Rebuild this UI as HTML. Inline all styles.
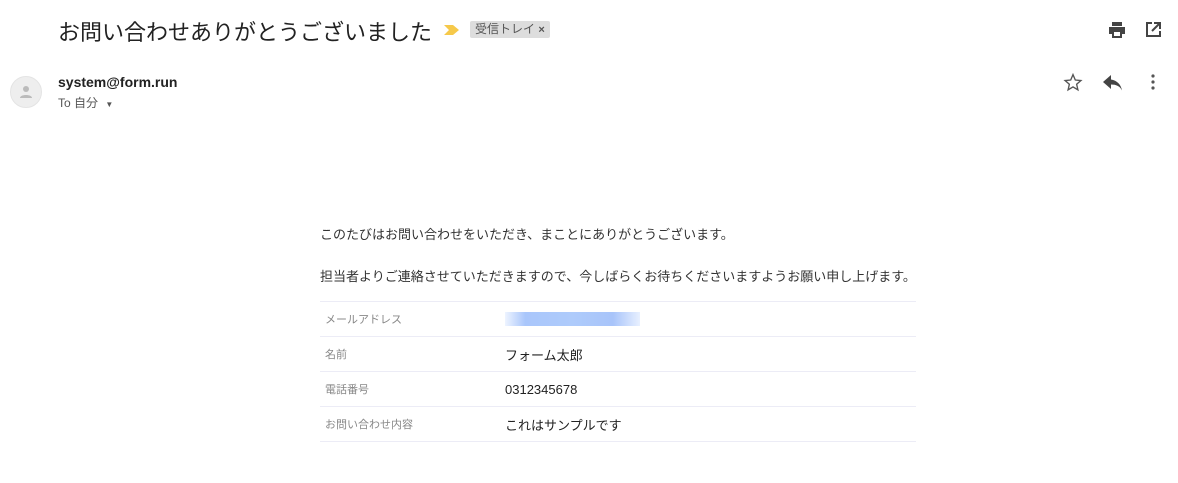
<!DOCTYPE html>
<html><head><meta charset="utf-8"><style>
body{margin:0;width:1178px;height:483px;background:#fff;font-family:"Liberation Sans","Noto Sans CJK JP",sans-serif;position:relative;overflow:hidden;color:#222}
.a{position:absolute;white-space:nowrap}
table{border-collapse:collapse;width:596px}
td{border-top:1px solid #ececf6;height:34px;font-size:13px;padding:0}
td.l{color:#888;font-size:11px;width:180px;padding-left:5px}
</style></head><body>
<div class="a" style="left:58px;top:15px;font-size:22px;color:#222">お問い合わせありがとうございました</div>
<svg class="a" style="left:444px;top:24px" width="16" height="12"><path d="M0 1h9l6 5-6 5H0l5-5z" fill="#f6c94a"/></svg>
<div class="a" style="left:470px;top:21px;height:17px;line-height:17px;background:#ddd;border-radius:2px;padding:0 5px;font-size:12px;color:#555">受信トレイ <b style="font-size:11px">×</b></div>
<svg class="a" style="left:1108px;top:22px" width="18" height="16" viewBox="0 0 18 16"><path d="M4 0h10v4H4z M1 5h16v7h-3v4H4v-4H1z" fill="#444"/><rect x="6" y="10" width="6" height="4" fill="#fff"/></svg>
<svg class="a" style="left:1145px;top:22px" width="16" height="16" viewBox="0 0 16 16"><path d="M7 1H2v13h13V9" fill="none" stroke="#444" stroke-width="2"/><path d="M9 1h6v6M15 1L7 9" fill="none" stroke="#444" stroke-width="2"/></svg>
<div class="a" style="left:10px;top:76px;width:32px;height:32px;border-radius:50%;background:#eee;border:1px solid #e4e4e4;box-sizing:border-box"></div>
<svg class="a" style="left:18px;top:84px" width="16" height="16"><circle cx="8" cy="5" r="3" fill="#bbb"/><path d="M2 14c0-4 12-4 12 0z" fill="#bbb"/></svg>
<div class="a" style="left:58px;top:74px;font-size:14px;font-weight:bold;color:#222">system@form.run</div>
<div class="a" style="left:58px;top:94px;font-size:12px;color:#555">To 自分 <span style="font-size:8px;margin-left:4px">▼</span></div>
<svg class="a" style="left:1063px;top:73px" width="20" height="19" viewBox="0 0 24 24"><path d="M12 2l2.9 6.9 7.1.6-5.4 4.7 1.6 7.1L12 17.6 5.8 21.3l1.6-7.1L2 9.5l7.1-.6z" fill="none" stroke="#555" stroke-width="1.7"/></svg>
<svg class="a" style="left:1103px;top:75px" width="20" height="16" viewBox="0 0 20 16"><path d="M8 0L0 7l8 7V9.5c5 0 9 1.5 11 6-1-6-5-10-11-11z" fill="#444"/></svg>
<svg class="a" style="left:1150px;top:73px" width="6" height="18"><circle cx="3" cy="3" r="1.6" fill="#555"/><circle cx="3" cy="9" r="1.6" fill="#555"/><circle cx="3" cy="15" r="1.6" fill="#555"/></svg>
<div class="a" style="left:320px;top:224px;font-size:13px;color:#333">このたびはお問い合わせをいただき、まことにありがとうございます。</div>
<div class="a" style="left:320px;top:266px;font-size:13px;color:#333">担当者よりご連絡させていただきますので、今しばらくお待ちくださいますようお願い申し上げます。</div>
<table class="a" style="left:320px;top:301px;border-bottom:1px solid #ececf6">
<tr><td class="l">メールアドレス</td><td><div style="width:135px;height:14px;background:linear-gradient(90deg,#eef4ff,#a9c6fb 15%,#aecbfb 50%,#a8c4fa 80%,#e8f0ff)"></div></td></tr>
<tr><td class="l">名前</td><td>フォーム太郎</td></tr>
<tr><td class="l">電話番号</td><td>0312345678</td></tr>
<tr><td class="l">お問い合わせ内容</td><td>これはサンプルです</td></tr>
</table>
</body></html>
